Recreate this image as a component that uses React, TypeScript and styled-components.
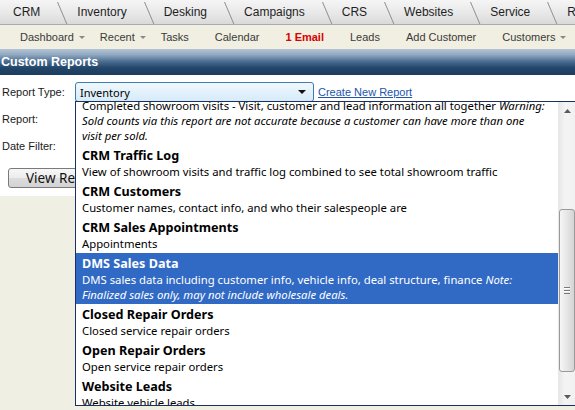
import React, { useLayoutEffect, useRef } from "react";
import styled, { createGlobalStyle } from "styled-components";

const Global = createGlobalStyle`
  html, body { margin: 0; padding: 0; }
  body {
    width: 575px;
    height: 410px;
    overflow: hidden;
    background: #efefe3;
    font-family: "Liberation Sans", Arial, sans-serif;
  }
`;

const Page = styled.div`
  width: 575px;
  height: 410px;
  overflow: hidden;
  display: flex;
  flex-direction: column;
  background: #efefe3;
`;

const TabBar = styled.nav`
  flex: none;
  height: 24px;
  display: flex;
  align-items: stretch;
  background: linear-gradient(#f5f5f5, #e8e8e8 55%, #dadada);
  border-bottom: 1px solid #ababab;
  white-space: nowrap;
  overflow: hidden;
`;

const Tab = styled.div<{ $first?: boolean }>`
  position: relative;
  flex: none;
  display: flex;
  align-items: center;
  padding: 0 18px 0 ${(p) => (p.$first ? "13px" : "19px")};
  font-size: 12px;
  color: #1e1e1e;
  &::after {
    content: "";
    position: absolute;
    right: 0;
    top: 2px;
    bottom: 0;
    width: 0;
    border-left: 1px solid #8e8e8e;
    transform-origin: top left;
    transform: skewX(23deg);
  }
`;

const SubNav = styled.nav`
  flex: none;
  height: 24px;
  display: flex;
  align-items: center;
  padding-left: 7px;
  background: #f0efe1;
  white-space: nowrap;
  overflow: hidden;
`;

const NavItem = styled.span<{ $alert?: boolean; $menu?: boolean }>`
  flex: none;
  display: flex;
  align-items: center;
  gap: 5px;
  padding: 0 ${(p) => (p.$menu ? "2px" : "13px")} 0 13px;
  font-size: 11px;
  color: ${(p) => (p.$alert ? "#d90000" : "#3a3a3a")};
  font-weight: ${(p) => (p.$alert ? "bold" : "normal")};
`;

const Caret = styled.i`
  display: inline-block;
  width: 0;
  height: 0;
  border-left: 3px solid transparent;
  border-right: 3px solid transparent;
  border-top: 3px solid #888;
`;

const Header = styled.h1`
  flex: none;
  margin: 0;
  height: 26px;
  display: flex;
  align-items: center;
  padding-left: 1px;
  font-size: 12.5px;
  font-weight: bold;
  color: #fff;
  background: linear-gradient(#b4c4d5 0%, #91a9c1 22%, #4a6d92 48%, #234769 72%, #1b3c5e 100%);
`;

const FormPanel = styled.section`
  flex: none;
  position: relative;
  height: 121px;
  box-sizing: border-box;
  padding-top: 7px;
  background: #fff;
`;

const FormGrid = styled.div`
  display: grid;
  grid-template-columns: 75px auto;
  grid-auto-rows: 20px;
  row-gap: 7px;
  align-items: center;
`;

const Label = styled.label`
  padding-left: 2px;
  font-size: 11px;
  color: #1a1a1a;
`;

const Control = styled.div`
  display: flex;
  align-items: center;
  gap: 4px;
`;

const SelectBox = styled.div`
  box-sizing: border-box;
  width: 239px;
  height: 20px;
  display: flex;
  align-items: center;
  justify-content: space-between;
  padding: 0 7px 0 4px;
  border: 1px solid #3d7bb3;
  border-radius: 3px;
  background: linear-gradient(#f1f8fd, #e3f1fb 50%, #d6ebf9);
  font-family: "Noto Sans", sans-serif;
  font-size: 11px;
  color: #000;
`;

const SelectArrow = styled.i`
  width: 0;
  height: 0;
  border-left: 4px solid transparent;
  border-right: 4px solid transparent;
  border-top: 4px solid #111;
`;

const Link = styled.a`
  font-size: 11px;
  color: #2256ac;
  text-decoration: underline;
`;

const ButtonRow = styled.div`
  margin-top: 12px;
  padding-left: 8px;
`;

const Button = styled.button`
  box-sizing: border-box;
  width: 112px;
  height: 20px;
  padding: 0;
  border: 1px solid #7a7a7a;
  border-radius: 3px;
  background: linear-gradient(#f7f7f7, #ececec 50%, #dddddd 51%, #d3d3d3);
  font-family: "Noto Sans", sans-serif;
  font-size: 13.5px;
  color: #111;
`;

const Dropdown = styled.div`
  position: absolute;
  left: 75px;
  top: 26px;
  width: 502px;
  height: 305px;
  box-sizing: border-box;
  border: 1px solid #1d2f5c;
  background: #fff;
  display: flex;
`;

const Viewport = styled.div`
  flex: 1;
  overflow: hidden;
`;

const Item = styled.div<{ $selected?: boolean }>`
  padding: 2px 6px;
  background: ${(p) => (p.$selected ? "#316ac5" : "transparent")};
  color: ${(p) => (p.$selected ? "#fff" : "#000")};
  font-family: "Noto Sans", sans-serif;
  white-space: nowrap;
`;

const ItemTitle = styled.div`
  font-size: 12.6px;
  font-weight: bold;
  line-height: 17px;
`;

const ItemDesc = styled.div`
  font-size: 11.3px;
  line-height: 15px;
`;

const ScrollBar = styled.div`
  flex: none;
  width: 18px;
  display: flex;
  flex-direction: column;
  background: linear-gradient(to right, #e6e6e6, #f4f4f4 40%, #f0f0f0);
`;

const ArrowBtn = styled.div`
  height: 17px;
  display: flex;
  align-items: center;
  justify-content: center;
`;

const Track = styled.div`
  flex: 1;
  display: flex;
  flex-direction: column;
  padding-top: 90px;
`;

const Thumb = styled.div`
  height: 163px;
  box-sizing: border-box;
  margin: 0 1px 0 1px;
  border: 1px solid #9a9a9a;
  border-radius: 3px;
  background: linear-gradient(to right, #f6f6f6, #e6e6e6 50%, #d4d4d4);
  display: flex;
  align-items: center;
  justify-content: center;
`;

const Grip = styled.div`
  width: 6px;
  height: 7px;
  background: repeating-linear-gradient(#7a7a7a 0 1px, #ffffff 1px 2px, transparent 2px 3px);
`;

function ArrowGlyph({ up }: { up?: boolean }) {
  return (
    <svg width="7" height="4" viewBox="0 0 7 4">
      <path d={up ? "M0 4 L3.5 0 L7 4 Z" : "M0 0 L3.5 4 L7 0 Z"} fill="#5a5a5a" />
    </svg>
  );
}

const tabs = ["CRM", "Inventory", "Desking", "Campaigns", "CRS", "Websites", "Service", "Reports"];

const navItems: { label: string; caret?: boolean; alert?: boolean }[] = [
  { label: "Dashboard", caret: true },
  { label: "Recent", caret: true },
  { label: "Tasks" },
  { label: "Calendar" },
  { label: "1 Email", alert: true },
  { label: "Leads" },
  { label: "Add Customer" },
  { label: "Customers", caret: true },
];

type Report = { title: string; desc: React.ReactNode; selected?: boolean };

const reports: Report[] = [
  {
    title: "CRM Showroom Visits",
    desc: (
      <>
        Completed showroom visits - Visit, customer and lead information all together <em>Warning:</em>
        <br />
        <em>Sold counts via this report are not accurate because a customer can have more than one</em>
        <br />
        <em>visit per sold.</em>
      </>
    ),
  },
  { title: "CRM Traffic Log", desc: "View of showroom visits and traffic log combined to see total showroom traffic" },
  { title: "CRM Customers", desc: "Customer names, contact info, and who their salespeople are" },
  { title: "CRM Sales Appointments", desc: "Appointments" },
  {
    title: "DMS Sales Data",
    selected: true,
    desc: (
      <>
        DMS sales data including customer info, vehicle info, deal structure, finance <em>Note:</em>
        <br />
        <em>Finalized sales only, may not include wholesale deals.</em>
      </>
    ),
  },
  { title: "Closed Repair Orders", desc: "Closed service repair orders" },
  { title: "Open Repair Orders", desc: "Open service repair orders" },
  { title: "Website Leads", desc: "Website vehicle leads" },
  { title: "Service Appointments", desc: "Scheduled service appointments" },
];

export default function App() {
  const listRef = useRef<HTMLDivElement>(null);
  useLayoutEffect(() => {
    if (listRef.current) listRef.current.scrollTop = 23;
  }, []);

  return (
    <Page>
      <Global />
      <TabBar>
        {tabs.map((t, i) => (
          <Tab key={t} $first={i === 0}>
            {t}
          </Tab>
        ))}
      </TabBar>
      <SubNav>
        {navItems.map((n) => (
          <NavItem key={n.label} $alert={n.alert} $menu={n.caret}>
            {n.label}
            {n.caret && <Caret />}
          </NavItem>
        ))}
      </SubNav>
      <Header>Custom Reports</Header>
      <FormPanel>
        <FormGrid>
          <Label>Report Type:</Label>
          <Control>
            <SelectBox>
              <span>Inventory</span>
              <SelectArrow />
            </SelectBox>
            <Link href="#">Create New Report</Link>
          </Control>
          <Label>Report:</Label>
          <Control />
          <Label>Date Filter:</Label>
          <Control />
        </FormGrid>
        <ButtonRow>
          <Button>View Report</Button>
        </ButtonRow>
        <Dropdown>
          <Viewport ref={listRef}>
            {reports.map((r) => (
              <Item key={r.title} $selected={r.selected}>
                <ItemTitle>{r.title}</ItemTitle>
                <ItemDesc>{r.desc}</ItemDesc>
              </Item>
            ))}
          </Viewport>
          <ScrollBar>
            <ArrowBtn>
              <ArrowGlyph up />
            </ArrowBtn>
            <Track>
              <Thumb>
                <Grip />
              </Thumb>
            </Track>
            <ArrowBtn>
              <ArrowGlyph />
            </ArrowBtn>
          </ScrollBar>
        </Dropdown>
      </FormPanel>
    </Page>
  );
}
